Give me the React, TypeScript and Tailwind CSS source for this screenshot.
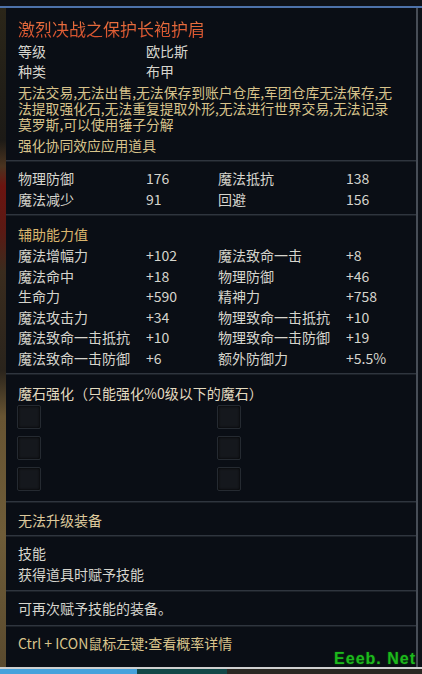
import React from "react";

const FONT = { fontFamily: '"Noto Sans CJK SC", "Noto Sans", sans-serif' };

const baseStats = [
  ["物理防御", "176", "魔法抵抗", "138"],
  ["魔法减少", "91", "回避", "156"],
];

const bonusStats = [
  ["魔法增幅力", "+102", "魔法致命一击", "+8"],
  ["魔法命中", "+18", "物理防御", "+46"],
  ["生命力", "+590", "精神力", "+758"],
  ["魔法攻击力", "+34", "物理致命一击抵抗", "+10"],
  ["魔法致命一击抵抗", "+10", "物理致命一击防御", "+19"],
  ["魔法致命一击防御", "+6", "额外防御力", "+5.5%"],
];

function Divider() {
  return (
    <div className="h-[2px] w-full bg-[#2f353e] border-b border-[#1b2027]" />
  );
}

function StatGrid({ rows, lh }: { rows: string[][]; lh: string }) {
  return (
    <div className={`grid grid-cols-[128px_72px_128px_1fr] text-[14px] text-[#d6d5cd] ${lh}`}>
      {rows.map((r, i) => (
        <React.Fragment key={i}>
          <span className="whitespace-nowrap">{r[0]}</span>
          <span>{r[1]}</span>
          <span className="whitespace-nowrap">{r[2]}</span>
          <span>{r[3]}</span>
        </React.Fragment>
      ))}
    </div>
  );
}

function Slot() {
  return (
    <div className="w-[24px] h-[24px] rounded-[2px] bg-[#15181d] border border-[#252a31] shadow-[inset_0_0_3px_#000]" />
  );
}

export default function App() {
  return (
    <div
      className="relative w-[422px] h-[674px] overflow-hidden flex flex-col bg-[#0b0e14]"
      style={FONT}
    >
      {/* top edge */}
      <div className="h-[6px] bg-[#0e1219]" />
      <div className="h-[2px] bg-[#4d72aa]" />

      <div className="flex flex-1 min-h-0">
        {/* game backdrop strip */}
        <div className="w-[6px] bg-[linear-gradient(180deg,#2b2619_0%,#1c1a16_20%,#4a3420_24%,#6b1410_27%,#5a1a14_34%,#3a2c1e_40%,#2a241c_55%,#675432_62%,#6e5c38_80%,#5a4a2e_100%)]" />

        {/* tooltip panel */}
        <div className="flex-1 flex flex-col bg-[#0a0e15]">
          {/* header */}
          <div className="pl-[12px] pt-[9px] pb-[7px]">
            <div className="text-[17px] leading-[24px] text-[#e2623a] bg-[linear-gradient(180deg,#f07a44,#d24a2a)] bg-clip-text [-webkit-text-fill-color:transparent] w-fit">
              激烈决战之保护长袍护肩
            </div>
            <div className="grid grid-cols-[128px_1fr] text-[14px] leading-[20px] text-[#d6d5cd]">
              <span>等级</span>
              <span>欧比斯</span>
              <span>种类</span>
              <span>布甲</span>
            </div>
            <div className="mt-[3px] text-[13.8px] leading-[16px] text-[#d8c38b] whitespace-nowrap">
              <div>无法交易,无法出售,无法保存到账户仓库,军团仓库无法保存,无</div>
              <div>法提取强化石,无法重复提取外形,无法进行世界交易,无法记录</div>
              <div>莫罗斯,可以使用锤子分解</div>
            </div>
            <div className="mt-[5px] text-[13.8px] leading-[16px] text-[#d8c38b]">强化协同效应应用道具</div>
          </div>
          <Divider />

          {/* base stats */}
          <div className="pl-[12px] pt-[6px] pb-[4px]">
            <StatGrid rows={baseStats} lh="leading-[21px]" />
          </div>
          <Divider />

          {/* bonus stats */}
          <div className="pl-[12px] pt-[7px] pb-[4px]">
            <div className="text-[14px] leading-[22px] text-[#d9b56d]">辅助能力值</div>
            <StatGrid rows={bonusStats} lh="leading-[20.6px]" />
          </div>
          <Divider />

          {/* manastones */}
          <div className="pl-[11px] pt-[8px] pb-[10px]">
            <div className="text-[14px] leading-[20px] text-[#e4dbc0] pl-[1px]">魔石强化（只能强化%0级以下的魔石）</div>
            <div className="mt-[2px] grid grid-cols-[200px_1fr] gap-y-[7px]">
              <Slot />
              <Slot />
              <Slot />
              <Slot />
              <Slot />
              <Slot />
            </div>
          </div>
          <Divider />

          <div className="pl-[12px] pt-[7px] pb-[5px] text-[14px] leading-[20px] text-[#ddc99c]">无法升级装备</div>
          <Divider />

          <div className="pl-[12px] pt-[6px] pb-[5px] text-[14px] leading-[21px] text-[#d6d5cd]">
            <div>技能</div>
            <div>获得道具时赋予技能</div>
          </div>
          <Divider />

          <div className="pl-[12px] pt-[6px] pb-[7px] text-[14px] leading-[20px] text-[#d6d5cd]">可再次赋予技能的装备。</div>
          <Divider />

          <div className="pl-[12px] pt-[6px] text-[14px] leading-[20px] text-[#d8c38b]">Ctrl + ICON鼠标左键:查看概率详情</div>
        </div>

        <div className="w-[2px] bg-[#474d56]" />
        <div className="w-[4px] bg-[#0d1118]" />
      </div>

      {/* bottom edge */}
      <div className="h-[2px] bg-[#cfd0d0]" />
      <div className="h-[5px] flex">
        <div className="w-[137px] bg-[#46a2dc]" />
        <div className="w-[90px] bg-[#124848]" />
        <div className="flex-1 bg-[#2a2823]" />
      </div>

      {/* watermark */}
      <div
        className="absolute right-[6px] bottom-[7px] text-[16px] leading-[16px] font-bold tracking-[1px] text-[#1db81d] [text-shadow:0_0_2px_#0a5a0a]"
        style={{ fontFamily: '"Liberation Sans", Arial, sans-serif' }}
      >
        Eeeb. Net
      </div>
    </div>
  );
}
